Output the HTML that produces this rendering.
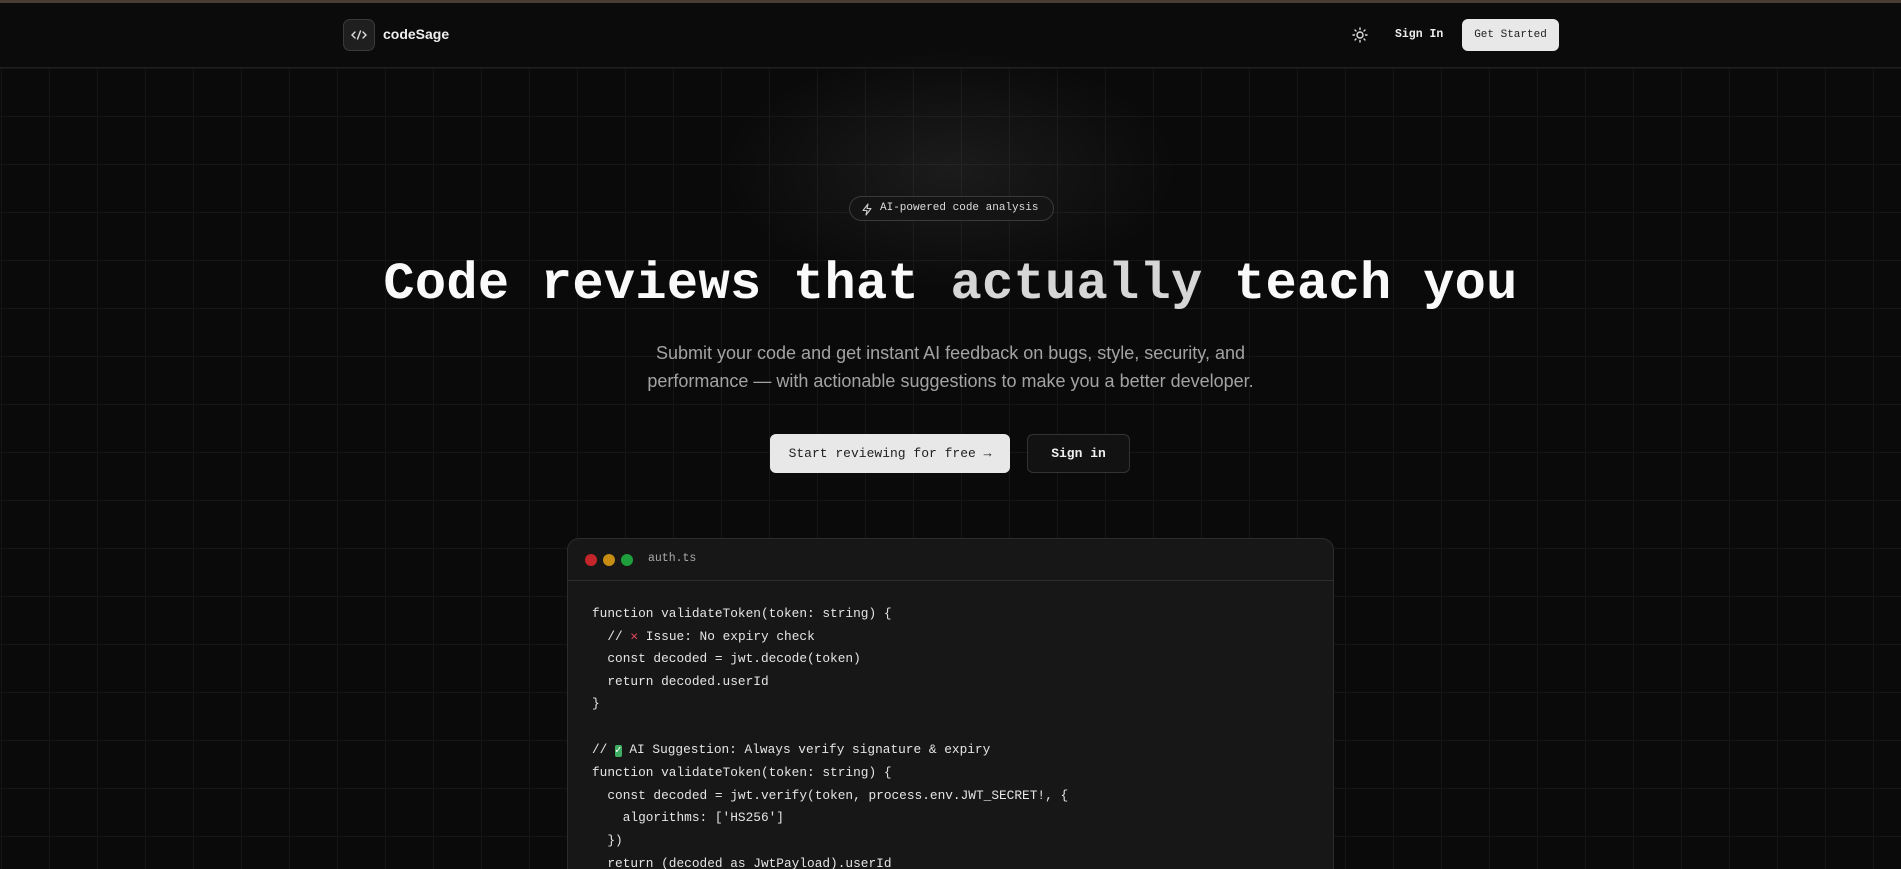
<!DOCTYPE html>
<html><head><meta charset="utf-8"><style>
*{margin:0;padding:0;box-sizing:border-box}
html,body{width:1901px;height:869px;overflow:hidden;background:#0a0a0a;color:#fff;font-family:"Liberation Sans",sans-serif;position:relative}
.top{position:absolute;left:0;top:0;width:1901px;height:3px;background:#4a3b33}
nav{position:absolute;left:0;top:3px;width:1901px;height:65px;border-bottom:1px solid #1f1f1f;background:#0b0b0b}
.grid{position:absolute;left:0;top:68px;width:1901px;height:801px;
background-image:linear-gradient(to right,#161616 1px,transparent 1px),linear-gradient(to bottom,#161616 1px,transparent 1px);
background-size:48px 48px;background-position:1px 0}
.glow{position:absolute;left:700px;top:40px;width:500px;height:260px;background:radial-gradient(ellipse at center,rgba(255,255,255,0.07),rgba(255,255,255,0) 65%)}
.logo{position:absolute;left:343px;top:19px;width:32px;height:32px;border:1px solid #3a3a3a;border-radius:7px;background:#1f1f1f}
.brand{position:absolute;left:383px;top:26px;font-size:14px;font-weight:bold;color:#eee}
.mono{font-family:"Liberation Mono",monospace}
.signin{position:absolute;left:1395px;top:28px;font-size:11.5px;font-weight:bold;color:#eee}
.gs{position:absolute;left:1462px;top:19px;width:97px;height:32px;background:#e8e8e8;border-radius:6px;color:#222;font-size:11px;text-align:center;line-height:32px}
.badge{position:absolute;left:849px;top:196px;width:205px;height:25px;border:1px solid #3a3a3a;border-radius:13px;background:#141414;font-size:11px;color:#ddd;line-height:23px;padding-left:30px}
h1{position:absolute;left:0;width:1901px;top:250px;text-align:center;font-family:"Liberation Mono",monospace;font-size:52px;font-weight:bold;color:#fafafa;line-height:70px;letter-spacing:0.3px}
h1 span{color:#d6d6d6}
p.sub{position:absolute;left:0;width:1901px;top:339px;text-align:center;font-size:18px;line-height:28px;color:#a3a3a3}
.b1{position:absolute;left:770px;top:434px;width:240px;height:39px;background:#e8e8e8;border-radius:6px;color:#222;font-size:13px;text-align:center;line-height:39px}
.b2{position:absolute;left:1027px;top:434px;width:103px;height:39px;background:#121212;border:1px solid #333;border-radius:6px;color:#eee;font-size:13px;font-weight:bold;text-align:center;line-height:37px}
.card{position:absolute;left:567px;top:538px;width:767px;height:331px;overflow:hidden;background:#171717;border:1px solid #2c2c2c;border-bottom:none;border-radius:12px 12px 0 0}
.ch{height:42px;border-bottom:1px solid #2c2c2c;position:relative}
.dot{position:absolute;top:15px;width:12px;height:12px;border-radius:50%}
.fn{position:absolute;left:80px;top:13px;font-size:11.5px;color:#aaa}
pre{position:absolute;left:24px;top:64px;font-family:"Liberation Mono",monospace;font-size:12.8px;line-height:22.6px;color:#e5e5e5}
</style></head><body>
<div class="top"></div>
<nav></nav>
<div class="grid"></div>
<div class="glow"></div>
<div class="logo"><svg width="30" height="30" viewBox="0 0 30 30"><path d="M11 12l-3 3 3 3M19 12l3 3-3 3M16.5 11l-3 8" stroke="#ddd" stroke-width="1.4" fill="none" stroke-linecap="round"/></svg></div>
<div class="brand">codeSage</div>
<svg style="position:absolute;left:1352px;top:27px" width="16" height="16" viewBox="0 0 16 16" stroke="#ddd" stroke-width="1.4" fill="none" stroke-linecap="round"><circle cx="8" cy="8" r="3"/><path d="M8 1v1.5M8 13.5V15M1 8h1.5M13.5 8H15M3 3l1 1M12 12l1 1M3 13l1-1M12 4l1-1"/></svg>
<div class="signin mono">Sign In</div>
<div class="gs mono">Get Started</div>
<div class="badge mono"><svg style="position:absolute;left:11px;top:6px" width="12" height="13" viewBox="0 0 12 13"><path d="M7 1L2 7.5h4L5 12l5-6.5H6z" stroke="#ccc" stroke-width="1.1" fill="none" stroke-linejoin="round"/></svg>AI-powered code analysis</div>
<h1>Code reviews that <span>actually</span> teach you</h1>
<p class="sub">Submit your code and get instant AI feedback on bugs, style, security, and<br>performance — with actionable suggestions to make you a better developer.</p>
<div class="b1 mono">Start reviewing for free →</div>
<div class="b2 mono">Sign in</div>
<div class="card">
<div class="ch"><div class="dot" style="left:17px;background:#c4262b"></div><div class="dot" style="left:35px;background:#c68d12"></div><div class="dot" style="left:53px;background:#1e9f3c"></div><div class="fn mono">auth.ts</div></div>
<pre>function validateToken(token: string) {
  // <span style="color:#e0445a;font-weight:bold">✕</span> Issue: No expiry check
  const decoded = jwt.decode(token)
  return decoded.userId
}

// <span style="background:#3fae60;color:#fff;font-size:11px;border-radius:2px">✓</span> AI Suggestion: Always verify signature &amp; expiry
function validateToken(token: string) {
  const decoded = jwt.verify(token, process.env.JWT_SECRET!, {
    algorithms: ['HS256']
  })
  return (decoded as JwtPayload).userId
}</pre>
</div>
</body></html>
